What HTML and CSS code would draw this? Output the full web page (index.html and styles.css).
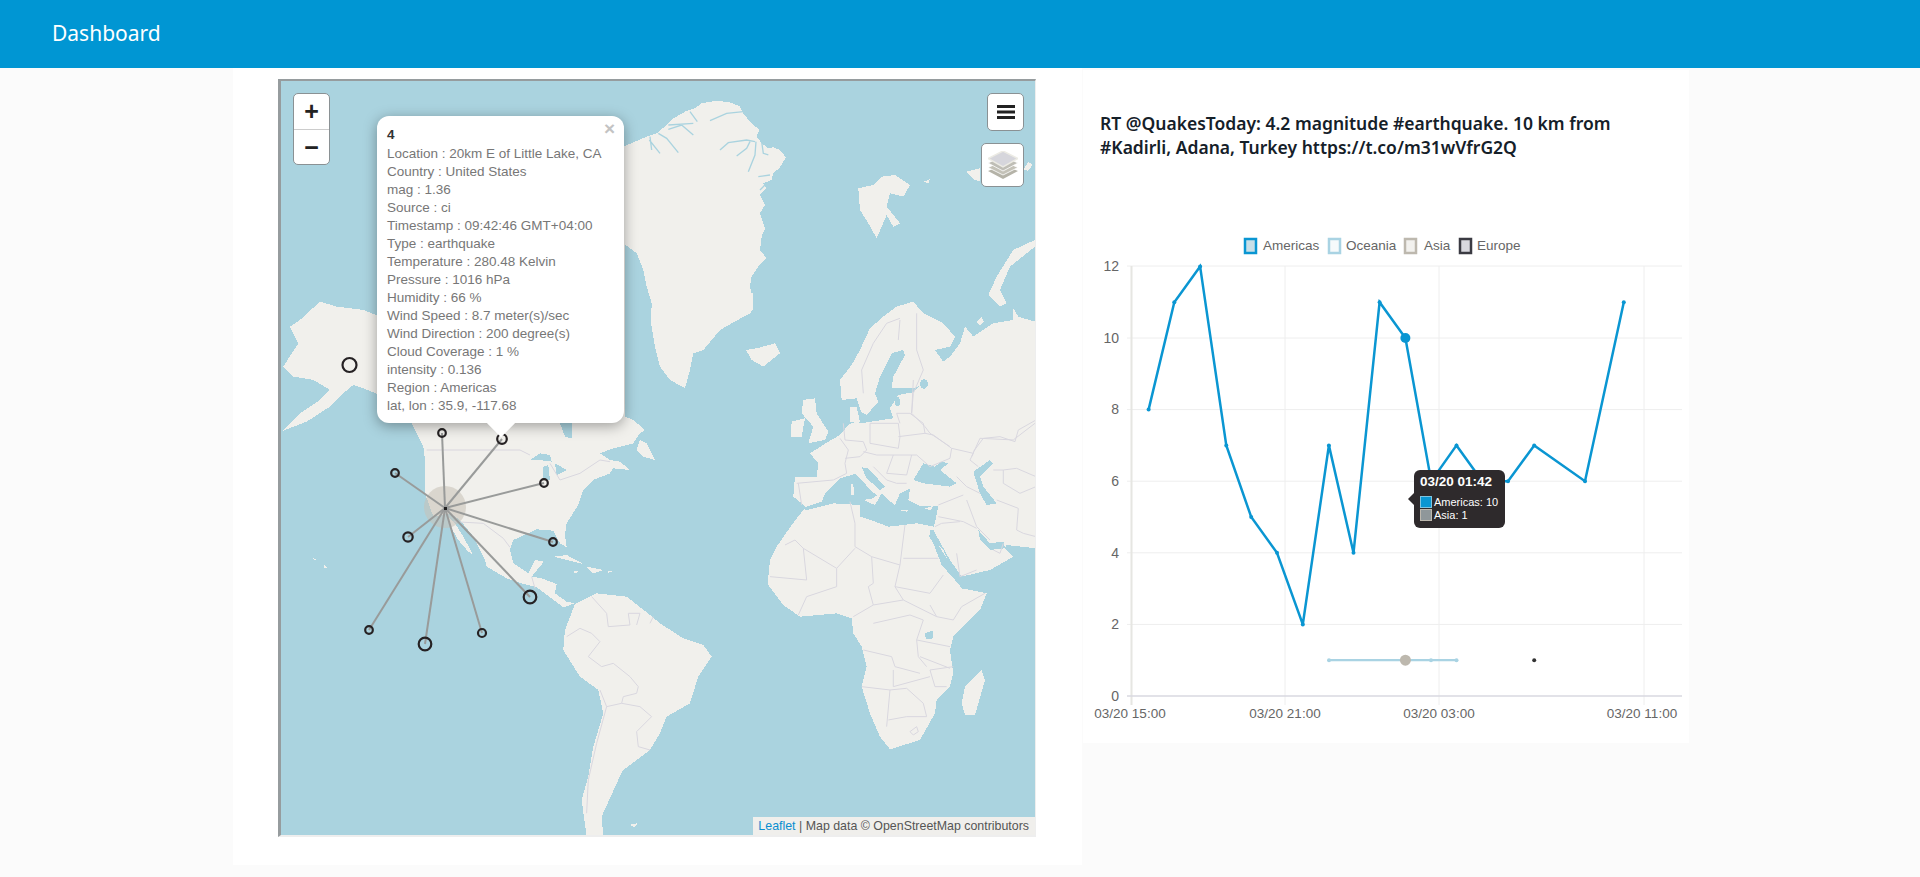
FILE: index.html
```html
<!DOCTYPE html>
<html>
<head>
    <meta charset="UTF-8">
    <title>Dashboard</title>
    <link rel="stylesheet" href="styles.css">
</head>
<body>
<header class="topbar">Dashboard</header>

<main class="content">
    <section class="card map-card">
        <div class="map">
            <svg class="map-svg" viewBox="281 81 754 754">
                <!-- greenland -->
                <g transform="translate(610 80) scale(.3333)">
                    <path class="land" d="M40,200 L75,185 L110,170 L140,160 L170,135 L190,115 L225,95 L255,85 L275,70 L320,62 L365,68 L390,80 L400,100 L420,125 L448,150 L440,170 L455,190 L475,205 L490,202 L510,210 L528,232 L510,262 L490,280 L485,300 L460,310 L470,325 L450,345 L465,375 L450,400 L465,445 L455,470 L450,510 L470,535 L445,560 L425,590 L420,620 L430,670 L125,670 L110,620 L100,570 L80,520 L40,490 Z"/>
                    <path class="fjord" d="M120,170 L125,210 M118,180 L150,220 M145,160 L170,175 L205,218 M175,148 L215,135 L250,165 M175,135 L250,130 M240,95 L262,125 M300,122 L350,100 L400,95 M330,210 L355,188 L410,180 L435,185 M380,228 L410,205 L420,185 M438,185 L435,225 L415,275 M455,185 L460,220 L475,225 M445,290 L480,285 M450,330 L470,310"/>
                </g>
                <g transform="translate(660 60) scale(.3333)">
                    <path class="land" d="M-24,700 L280,700 L280,745 L270,760 L215,790 L180,810 L130,870 L100,880 L90,930 L75,985 L30,960 L0,920 L-15,860 L-27,790 Z"/>
                    <!-- iceland, svalbard, novaya zemlya -->
                    <path class="land" d="M258,870 L290,865 L345,850 L360,880 L310,920 L275,900 Z"/>
                    <path class="land" d="M595,385 L640,375 L665,350 L705,345 L750,375 L730,410 L690,400 L680,440 L720,490 L700,500 L680,465 L650,535 L625,490 L600,450 Z"/>
                    <path class="land" d="M1125,540 L1060,570 L1010,650 L985,705 L1020,740 L1040,730 L1020,690 L1050,620 L1125,560 Z"/>
                    <path class="land" d="M920,335 L960,325 L960,365 L945,360 Z M1090,330 L1105,305 L1118,315 L1105,332 Z M790,365 L810,358 L805,370 Z M950,785 L965,772 L972,785 L960,795 Z"/>
                    <!-- scandinavia and russia -->
                    <path class="land" d="M545,1020 L540,960 L575,915 L600,870 L630,805 L670,770 L710,740 L760,725 L790,760 L850,790 L885,830 L870,860 L825,870 L850,905 L870,890 L900,850 L915,800 L940,830 L1000,790 L1060,780 L1060,745 L1075,770 L1125,785 L1130,1200 L640,1200 L610,1075 L590,1015 Z"/>
                    <path class="land" d="M430,1020 L465,1015 L470,1060 L505,1115 L495,1140 L445,1150 L460,1100 L425,1060 Z M395,1085 L435,1075 L425,1130 L392,1130 Z"/>
                </g>
                <g transform="translate(220 60) scale(.3333)">
                    <path class="land" d="M210,800 L240,780 L300,725 L350,740 L430,750 L480,770 L480,1005 L430,985 L400,975 L370,1000 L330,1040 L260,1085 L190,1112 L240,1060 L300,1020 L330,990 L280,960 L220,950 L190,920 L215,880 L235,850 Z"/>
                </g>
                <!-- the americas -->
                <g transform="translate(220 460) scale(.3333)">
                    <path class="land" d="M575,-800 L575,-110 L595,-70 L610,-40 L615,0 L615,100 L640,170 L690,160 L720,180 L760,230 L795,300 L800,320 L860,355 L905,370 L950,382 L990,412 L1030,442 L1065,430 L1040,425 L1005,400 L1010,372 L965,355 L935,350 L972,305 L945,300 L925,340 L880,310 L870,270 L880,240 L950,208 L1000,212 L1020,250 L1040,262 L1035,225 L1040,190 L1075,135 L1090,90 L1120,60 L1170,40 L1180,25 L1230,30 L1200,5 L1170,0 L1140,-20 L1180,-35 L1240,-50 L1260,-80 L1275,-90 L1240,-120 L1215,-130 L1215,-800 Z"/>
                    <path class="land" d="M680,165 L705,190 L730,230 L760,285 L745,275 L715,240 L695,205 Z"/>
                    <path class="land" d="M1260,-60 L1280,-50 L1305,0 L1270,-10 L1250,-30 Z"/>
                    <path class="land" d="M1000,290 L1040,285 L1090,312 L1060,305 L1020,295 Z M1100,320 L1150,330 L1120,340 Z M1060,332 L1078,335 L1065,340 Z M1165,333 L1178,335 L1165,338 Z M280,295 L290,300 L282,300 Z M312,315 L322,322 L312,326 Z"/>
                    <path class="land" d="M1065,432 L1035,510 L1030,570 L1080,650 L1135,690 L1150,760 L1120,860 L1105,950 L1085,1020 L1100,1130 L1150,1130 L1145,1070 L1195,960 L1210,930 L1290,870 L1320,820 L1340,770 L1410,730 L1435,650 L1475,590 L1450,555 L1390,535 L1320,490 L1290,465 L1220,410 L1130,400 Z"/>
                    <path class="land" d="M1228,1095 L1252,1090 L1245,1102 Z"/>
                    <path class="sea-part" d="M930,0 L960,-20 L990,-15 L995,5 L960,0 Z M970,20 L985,15 L990,60 L970,60 Z M1005,10 L1040,30 L1010,45 Z M1020,-110 L1055,-110 L1055,-65 L1035,-70 Z"/>
                    <path class="border" d="M620,-30 L900,-30 L930,-15 M990,10 L1020,60 L1080,40 L1140,0 L1170,5 M700,185 L790,190 L850,235 L870,262 M935,350 L945,385 M1115,410 L1160,460 L1165,500 L1230,495 L1225,460 L1260,460 L1250,495 M1300,470 L1290,490 M1040,530 L1080,505 L1115,520 L1140,545 L1105,590 L1145,620 L1180,610 L1230,650 L1255,680 L1250,700 L1210,710 L1205,730 L1160,740 L1140,690 M1160,740 L1130,850 L1105,960 L1100,1060 M1205,730 L1260,740 L1295,770 L1250,815 L1255,860 L1290,870"/>
                </g>
                <!-- africa -->
                <g transform="translate(660 460) scale(.3333)">
                    <path class="land" d="M330,300 L350,260 L395,195 L430,150 L440,130 L510,125 L570,120 L595,165 L650,180 L680,205 L725,190 L790,200 L810,205 L810,225 L850,270 L905,385 L980,400 L960,450 L880,530 L870,570 L880,640 L870,680 L830,720 L825,760 L780,840 L690,868 L660,830 L630,760 L605,680 L620,620 L605,560 L580,520 L575,475 L530,460 L420,470 L370,435 L325,375 L325,350 Z"/>
                    <path class="land" d="M965,630 L975,660 L945,765 L915,765 L905,730 L915,680 Z"/>
                </g>
                <!-- europe and western asia -->
                <g transform="translate(760 380) scale(.3333)">
                    <path class="land" d="M340,100 L265,135 L240,165 L205,185 L150,220 L175,250 L170,290 L105,290 L100,350 L135,378 L140,440 L520,450 L570,540 L605,590 L690,570 L760,530 L735,505 L740,495 L828,505 L828,100 Z"/>
                    <path class="sea-part" d="M125,385 L185,365 L195,340 L240,295 L285,282 L305,300 L335,335 L352,345 L340,355 L310,360 L345,375 L365,340 L385,360 L405,375 L420,340 L450,325 L445,360 L480,378 L530,378 L535,380 L522,440 L470,430 L430,435 L385,440 L345,425 L300,410 L300,375 L220,370 L140,390 Z"/>
                    <path class="sea-part" d="M305,262 L325,265 L375,320 L360,330 L320,295 Z"/>
                    <path class="sea-part" d="M460,300 L490,250 L530,262 L510,270 L545,245 L565,250 L540,270 L590,310 L570,320 L490,310 Z"/>
                    <path class="sea-part" d="M640,275 L690,240 L700,250 L660,290 L670,320 L710,370 L680,375 L660,340 Z"/>
                    <path class="sea-part" d="M655,450 L690,490 L730,485 L735,505 L690,510 L660,480 Z"/>
                    <path class="sea-part" d="M505,465 L520,470 L560,535 L605,590 L610,630 L585,600 L545,555 L520,490 Z"/>
                    <path class="land" d="M272,312 L280,312 L282,345 L272,345 Z M318,358 L340,356 L335,372 Z M415,390 L445,390 L440,395 Z M495,385 L520,378 L510,392 Z"/>
                </g>
                <g transform="translate(660 60) scale(.3333)">
                    <path class="sea-part" d="M660,950 L695,880 L730,870 L735,885 L700,950 L695,985 L765,985 L780,975 L760,997 L715,1005 L690,1045 L700,1075 L635,1085 L600,1090 L575,1070 L580,1040 L600,1055 L620,1065 L655,1025 L645,1000 Z"/>
                    <path class="land" d="M570,1040 L590,1040 L600,1085 L570,1085 Z"/>
                    <ellipse class="sea-part" cx="792" cy="972" rx="12" ry="14"/>
                    <ellipse class="sea-part" cx="712" cy="1025" rx="8" ry="14"/>
                    <path class="border" d="M610,1000 L605,930 L640,850 L680,790 L720,775 M720,780 L715,840 M770,760 L770,870 L790,930 L760,1000 L755,1060 L795,1100 L810,1120 L870,1160 M935,1190 L960,1135 L1060,1140 L1125,1090"/>
                </g>
                <g transform="translate(760 380) scale(.3333)">
                    <path class="border" d="M240,175 L265,210 L255,250 L260,280 L220,300 L110,310 M250,130 L255,180 L310,185 L320,210 L300,230 L255,235 M330,130 L330,190 L415,205 L420,170 L415,130 L330,130 M415,170 L495,160 L520,165 L575,205 L570,235 L510,260 L470,225 L400,225 L350,225 L310,215 M400,225 L380,280 L440,285 L455,225 M340,260 L380,300 L410,310 L440,310 M115,310 L125,375 M420,130 L410,100 L450,100 L490,130 L495,160 M460,0 L455,100 M640,215 L670,175 L720,170 L765,185 L775,150 L828,120 M575,205 L640,220 L630,240 L655,260 M590,290 L620,320 L660,340 M610,345 L535,375 M620,360 L650,440 L690,480 M535,410 L610,425 L650,445 M525,440 L545,430 L600,425 M700,270 L730,270 L770,265 L828,290 M730,270 L730,310 L780,340 L828,320 M710,360 L775,385 L770,450 L790,460 L828,470 M590,520 L600,590 L650,570 M730,490 L720,520 L700,510"/>
                </g>
                <g transform="translate(660 460) scale(.3333)">
                    <path class="border" d="M570,125 L585,190 L585,260 L635,290 L720,315 L735,195 M730,295 L835,295 M585,265 L530,325 L430,265 L405,240 L375,255 M430,265 L440,360 L330,350 M530,325 L530,380 L440,410 L415,465 M635,290 L640,370 L625,380 L640,435 L580,470 M720,315 L705,380 L730,420 L640,435 M705,380 L810,400 L850,345 M810,435 L830,470 L880,480 L905,440 L975,400 M730,420 L830,470 M640,490 L750,465 L790,480 L770,540 L775,590 L800,620 M610,570 L695,590 L705,620 L780,640 M605,680 L690,690 L680,800 M700,630 L700,680 L810,650 M690,690 L740,685 L790,730 L800,770 L740,770 L685,780 M880,620 L810,630 L825,680 L860,680 M770,540 L870,560 M780,590 L870,625 M750,815 L770,800 L775,815 L760,825 Z"/>
                    <path class="sea-part" d="M795,520 L818,512 L820,535 L798,538 Z"/>
                </g>
                <!-- spider markers -->
                <circle class="spider-blob" cx="445" cy="507" r="21"/>
                <g class="spokes">
                    <line x1="445" y1="508" x2="395" y2="473"/>
                    <line x1="445" y1="508" x2="408" y2="537"/>
                    <line x1="445" y1="508" x2="369" y2="630"/>
                    <line x1="445" y1="508" x2="425" y2="644"/>
                    <line x1="445" y1="508" x2="482" y2="633"/>
                    <line x1="445" y1="508" x2="530" y2="597"/>
                    <line x1="445" y1="508" x2="553" y2="542"/>
                    <line x1="445" y1="508" x2="544" y2="483"/>
                    <line x1="445" y1="508" x2="442" y2="433"/>
                    <line x1="445" y1="508" x2="502" y2="439"/>
                </g>
                <g class="rings">
                    <circle cx="395" cy="473" r="3.8"/>
                    <circle cx="408" cy="537" r="4.7"/>
                    <circle cx="369" cy="630" r="3.8"/>
                    <circle cx="425" cy="644" r="6.3"/>
                    <circle cx="482" cy="633" r="4"/>
                    <circle cx="530" cy="597" r="6.3"/>
                    <circle cx="553" cy="542" r="3.8"/>
                    <circle cx="544" cy="483" r="3.8"/>
                    <circle cx="442" cy="433" r="3.8"/>
                    <circle cx="502" cy="439" r="4.8"/>
                    <circle cx="349.5" cy="365" r="7"/>
                </g>
                <rect x="444" y="507" width="3" height="3" fill="#222"/>
            </svg>

            <div class="map-btn zoom-ctrl">
                <span class="zoom-btn">+</span>
                <span class="zoom-btn zoom-out">&minus;</span>
            </div>
            <div class="map-btn menu-btn">
                <svg width="18" height="14" viewBox="0 0 18 14"><path d="M0 0h18v3H0zM0 5.500h18v3H0zM0 11h18v3H0z" fill="#222"/></svg>
            </div>
            <div class="map-btn layers-btn">
                <svg width="30" height="28" viewBox="0 0 30 28">
                    <path d="M15 14 L30 20 L15 28 L0 20 Z" fill="#b5b3a8"/>
                    <path d="M15 10 L30 16.500 L15 24 L0 16.500 Z" fill="#c4c2b8" stroke="#fff" stroke-width=".8"/>
                    <path d="M15 5 L30 12 L15 20 L0 12 Z" fill="#bfbeb6" stroke="#fff" stroke-width=".8"/>
                    <path d="M15 0 L30 7.500 L15 16 L0 7.500 Z" fill="#d6d6dc" stroke="#ecebe4" stroke-width="1.500"/>
                </svg>
            </div>

            <div class="popup">
                <span class="popup-close">&times;</span>
                <b class="popup-title">4</b>
                <div>Location : 20km E of Little Lake, CA</div>
                <div>Country : United States</div>
                <div>mag : 1.36</div>
                <div>Source : ci</div>
                <div>Timestamp : 09:42:46 GMT+04:00</div>
                <div>Type : earthquake</div>
                <div>Temperature : 280.48 Kelvin</div>
                <div>Pressure : 1016 hPa</div>
                <div>Humidity : 66 %</div>
                <div>Wind Speed : 8.7 meter(s)/sec</div>
                <div>Wind Direction : 200 degree(s)</div>
                <div>Cloud Coverage : 1 %</div>
                <div>intensity : 0.136</div>
                <div>Region : Americas</div>
                <div>lat, lon : 35.9, -117.68</div>
            </div>
            <div class="popup-tip"></div>

            <div class="attribution"><a class="attr-link">Leaflet</a> | Map data &copy; OpenStreetMap contributors</div>
        </div>
    </section>

    <section class="card chart-card">
        <p class="tweet">RT @QuakesToday: 4.2 magnitude #earthquake. 10 km from<br>#Kadirli, Adana, Turkey https://t.co/m31wVfrG2Q</p>
        <div class="chart">
            <svg class="chart-svg" viewBox="1083 230 606 500">
                <g class="grid">
                    <path d="M1127 266H1682M1127 338H1682M1127 409.600H1682M1127 481.200H1682M1127 552.800H1682M1127 624.400H1682"/>
                    <path d="M1285 266V705M1439 266V705M1644 266V705"/>
                </g>
                <path class="axis-y" d="M1131.500 266V705"/>
                <path class="axis-x" d="M1127 696H1682"/>

                <g class="legend-box">
                    <rect x="1245" y="239" width="11" height="14" fill="#c8dfe8" stroke="#0a96d2"/>
                    <rect x="1329" y="239" width="11" height="14" fill="#f6fafb" stroke="#a9d3e3"/>
                    <rect x="1405" y="239" width="11" height="14" fill="#f2f1ee" stroke="#bdb8ae"/>
                    <rect x="1460" y="239" width="11" height="14" fill="#d8d8de" stroke="#3a3a42"/>
                </g>
                <g class="legend-text">
                    <text x="1263" y="250">Americas</text>
                    <text x="1346" y="250">Oceania</text>
                    <text x="1424" y="250">Asia</text>
                    <text x="1477" y="250">Europe</text>
                </g>

                <g class="y-labels">
                    <text x="1119" y="271">12</text>
                    <text x="1119" y="343">10</text>
                    <text x="1119" y="414">8</text>
                    <text x="1119" y="486">6</text>
                    <text x="1119" y="558">4</text>
                    <text x="1119" y="629">2</text>
                    <text x="1119" y="701">0</text>
                </g>
                <g class="x-labels">
                    <text x="1130" y="718">03/20 15:00</text>
                    <text x="1285" y="718">03/20 21:00</text>
                    <text x="1439" y="718">03/20 03:00</text>
                    <text x="1642" y="718">03/20 11:00</text>
                </g>

                <polyline class="line-oceania" points="1329,660.200 1405,660.200 1431,660.200 1456.500,660.200"/>
                <g class="dots-oceania">
                    <circle cx="1329" cy="660.200" r="2"/>
                    <circle cx="1431" cy="660.200" r="2"/>
                    <circle cx="1456.500" cy="660.200" r="2"/>
                </g>
                <circle cx="1405.400" cy="660.200" r="5.500" fill="#bdb8ae"/>
                <circle cx="1534.200" cy="660.200" r="2" fill="#333"/>

                <polyline class="line-americas" points="1148.600,409.600 1174.300,302.200 1200.100,266.400 1226.300,445.400 1251.200,517 1277,552.800 1302.800,624.400 1328.900,445.400 1353.500,552.800 1379.600,302.200 1405.400,338 1431.200,481.200 1456.500,445.400 1482.300,481.200 1508,481.200 1534.200,445.400 1585,481.200 1623.800,302.200"/>
                <g class="dots-americas">
                    <circle cx="1148.600" cy="409.600" r="2"/>
                    <circle cx="1174.300" cy="302.200" r="2"/>
                    <circle cx="1200.100" cy="266.400" r="2"/>
                    <circle cx="1226.300" cy="445.400" r="2"/>
                    <circle cx="1251.200" cy="517" r="2"/>
                    <circle cx="1277" cy="552.800" r="2"/>
                    <circle cx="1302.800" cy="624.400" r="2"/>
                    <circle cx="1328.900" cy="445.400" r="2"/>
                    <circle cx="1353.500" cy="552.800" r="2"/>
                    <circle cx="1379.600" cy="302.200" r="2"/>
                    <circle cx="1405.400" cy="338" r="5"/>
                    <circle cx="1456.500" cy="445.400" r="2"/>
                    <circle cx="1508" cy="481.200" r="2"/>
                    <circle cx="1534.200" cy="445.400" r="2"/>
                    <circle cx="1585" cy="481.200" r="2"/>
                    <circle cx="1623.800" cy="302.200" r="2"/>
                </g>
            </svg>

            <div class="chart-tip">
                <div class="tip-title">03/20 01:42</div>
                <div class="tip-row"><i class="tip-swatch swatch-americas"></i>Americas: 10</div>
                <div class="tip-row"><i class="tip-swatch swatch-asia"></i>Asia: 1</div>
            </div>
        </div>
    </section>
</main>
</body>
</html>
```

FILE: styles.css
```css
body {
    margin: 0;
    background-color: #fbfbfb;
    font-family: "Liberation Sans", Arial, sans-serif;
}

.topbar {
    height: 68px;
    padding-left: 52px;
    background-color: #0096d3;
    color: #fff;
    font-family: "Noto Sans", sans-serif;
    font-size: 21px;
    line-height: 66px;
}

.content {
    display: flex;
    align-items: flex-start;
    padding-left: 233px;
}

.card {
    background-color: #fff;
}

.map-card {
    width: 849px;
    height: 797px;
    padding: 11px 0 0 45px;
    box-sizing: border-box;
}

.map {
    position: relative;
    width: 754px;
    height: 754px;
    border-style: solid;
    border-width: 2px 1px 2px 3px;
    border-color: #969c9e #eeeeee #eeeeee #969c9e;
    background-color: #aad3df;
    overflow: hidden;
}

.map-svg {
    display: block;
    width: 754px;
    height: 754px;
}

.land {
    fill: #f1f0ec;
    shape-rendering: crispEdges;
}

.sea-part {
    fill: #aad3df;
    shape-rendering: crispEdges;
}

.fjord {
    fill: none;
    stroke: #aad3df;
    stroke-width: 4;
}

.border {
    fill: none;
    stroke: #d9d7df;
    stroke-width: 3;
}

.spider-blob {
    fill: #c6c1b7;
    opacity: .55;
}

.spokes line {
    stroke: #999b9a;
    stroke-width: 2;
}

.rings circle {
    fill: none;
    stroke: #262224;
    stroke-width: 2.2;
}

.map-btn {
    position: absolute;
    background-color: #fff;
    border: 1.5px solid #8a9194;
    border-radius: 5px;
    box-sizing: border-box;
}

.zoom-ctrl {
    left: 12px;
    top: 12px;
    width: 37px;
    height: 72px;
}

.zoom-btn {
    display: block;
    height: 35px;
    color: #222;
    font-size: 25px;
    font-weight: bold;
    line-height: 35px;
    text-align: center;
}

.zoom-out {
    border-top: 1px solid #ccc;
}

.menu-btn {
    left: 706px;
    top: 12px;
    width: 37px;
    height: 38px;
    display: flex;
    align-items: center;
    justify-content: center;
}

.layers-btn {
    left: 700px;
    top: 62px;
    width: 43px;
    height: 44px;
    display: flex;
    align-items: center;
    justify-content: center;
}

.popup {
    position: absolute;
    left: 96px;
    top: 35px;
    width: 247px;
    height: 307px;
    padding: 10px 10px;
    box-sizing: border-box;
    background-color: #fff;
    border-radius: 12px;
    box-shadow: 0 3px 14px rgba(0, 0, 0, .35);
    color: #777;
    font-size: 13.5px;
    line-height: 18px;
}

.popup-title {
    display: block;
    height: 19px;
    color: #333;
}

.popup-close {
    position: absolute;
    right: 9px;
    top: 3px;
    color: #c3c3c3;
    font-size: 19px;
    font-weight: bold;
    line-height: 20px;
}

.popup-tip {
    position: absolute;
    left: 210px;
    top: 332px;
    width: 20px;
    height: 20px;
    background-color: #fff;
    transform: rotate(45deg);
}

.attribution {
    position: absolute;
    right: 0;
    bottom: 0;
    height: 18px;
    padding: 0 6px 0 5px;
    background-color: #f0efec;
    color: #555;
    font-size: 12.4px;
    line-height: 18px;
}

.attr-link {
    color: #0a8ed0;
}

.chart-card {
    width: 606px;
    height: 673px;
    margin: 2px 0 0 1px;
}

.tweet {
    margin: 0;
    padding: 41px 0 0 17px;
    color: #152029;
    font-family: "Noto Sans", sans-serif;
    font-size: 17.5px;
    font-weight: 600;
    line-height: 24px;
    white-space: nowrap;
}

.chart {
    position: relative;
    margin-top: 71px;
}

.chart-svg {
    display: block;
    width: 606px;
    height: 500px;
}

.grid path {
    fill: none;
    stroke: #eeeeee;
}

.axis-y {
    stroke: #e6e6e2;
    stroke-width: 2;
}

.axis-x {
    stroke: #d8d8e0;
    stroke-width: 1.5;
}

.legend-box rect {
    stroke-width: 2.5;
}

.legend-text text {
    fill: #666;
    font-size: 13.5px;
}

.y-labels text {
    fill: #666;
    font-size: 14px;
    text-anchor: end;
}

.x-labels text {
    fill: #666;
    font-size: 13.5px;
    text-anchor: middle;
}

.line-americas {
    fill: none;
    stroke: #0a96d2;
    stroke-width: 2.5;
}

.dots-americas circle {
    fill: #0a96d2;
}

.line-oceania {
    fill: none;
    stroke: #a9d3e3;
    stroke-width: 2.2;
}

.dots-oceania circle {
    fill: #a9d3e3;
}

.chart-tip {
    position: absolute;
    left: 331px;
    top: 240px;
    width: 91px;
    height: 58px;
    padding: 4px 6px;
    box-sizing: border-box;
    background-color: #2e2a2c;
    border-radius: 6px;
    color: #fff;
    font-size: 11px;
    white-space: nowrap;
}

.chart-tip::before {
    content: "";
    position: absolute;
    left: -6px;
    top: 23px;
    border-style: solid;
    border-width: 6px 6px 6px 0;
    border-color: transparent #2e2a2c transparent transparent;
}

.tip-title {
    margin-bottom: 6px;
    font-size: 13.5px;
    font-weight: bold;
    line-height: 16px;
}

.tip-row {
    display: flex;
    align-items: center;
    height: 12.5px;
}

.tip-swatch {
    width: 10px;
    height: 10px;
    margin-right: 2px;
    border: 1px solid #fff;
    flex: none;
}

.swatch-americas {
    background-color: #0a96d2;
    border-color: #7fc4e0;
}

.swatch-asia {
    background-color: #8f979a;
    border-color: #bdb8ae;
}
```
